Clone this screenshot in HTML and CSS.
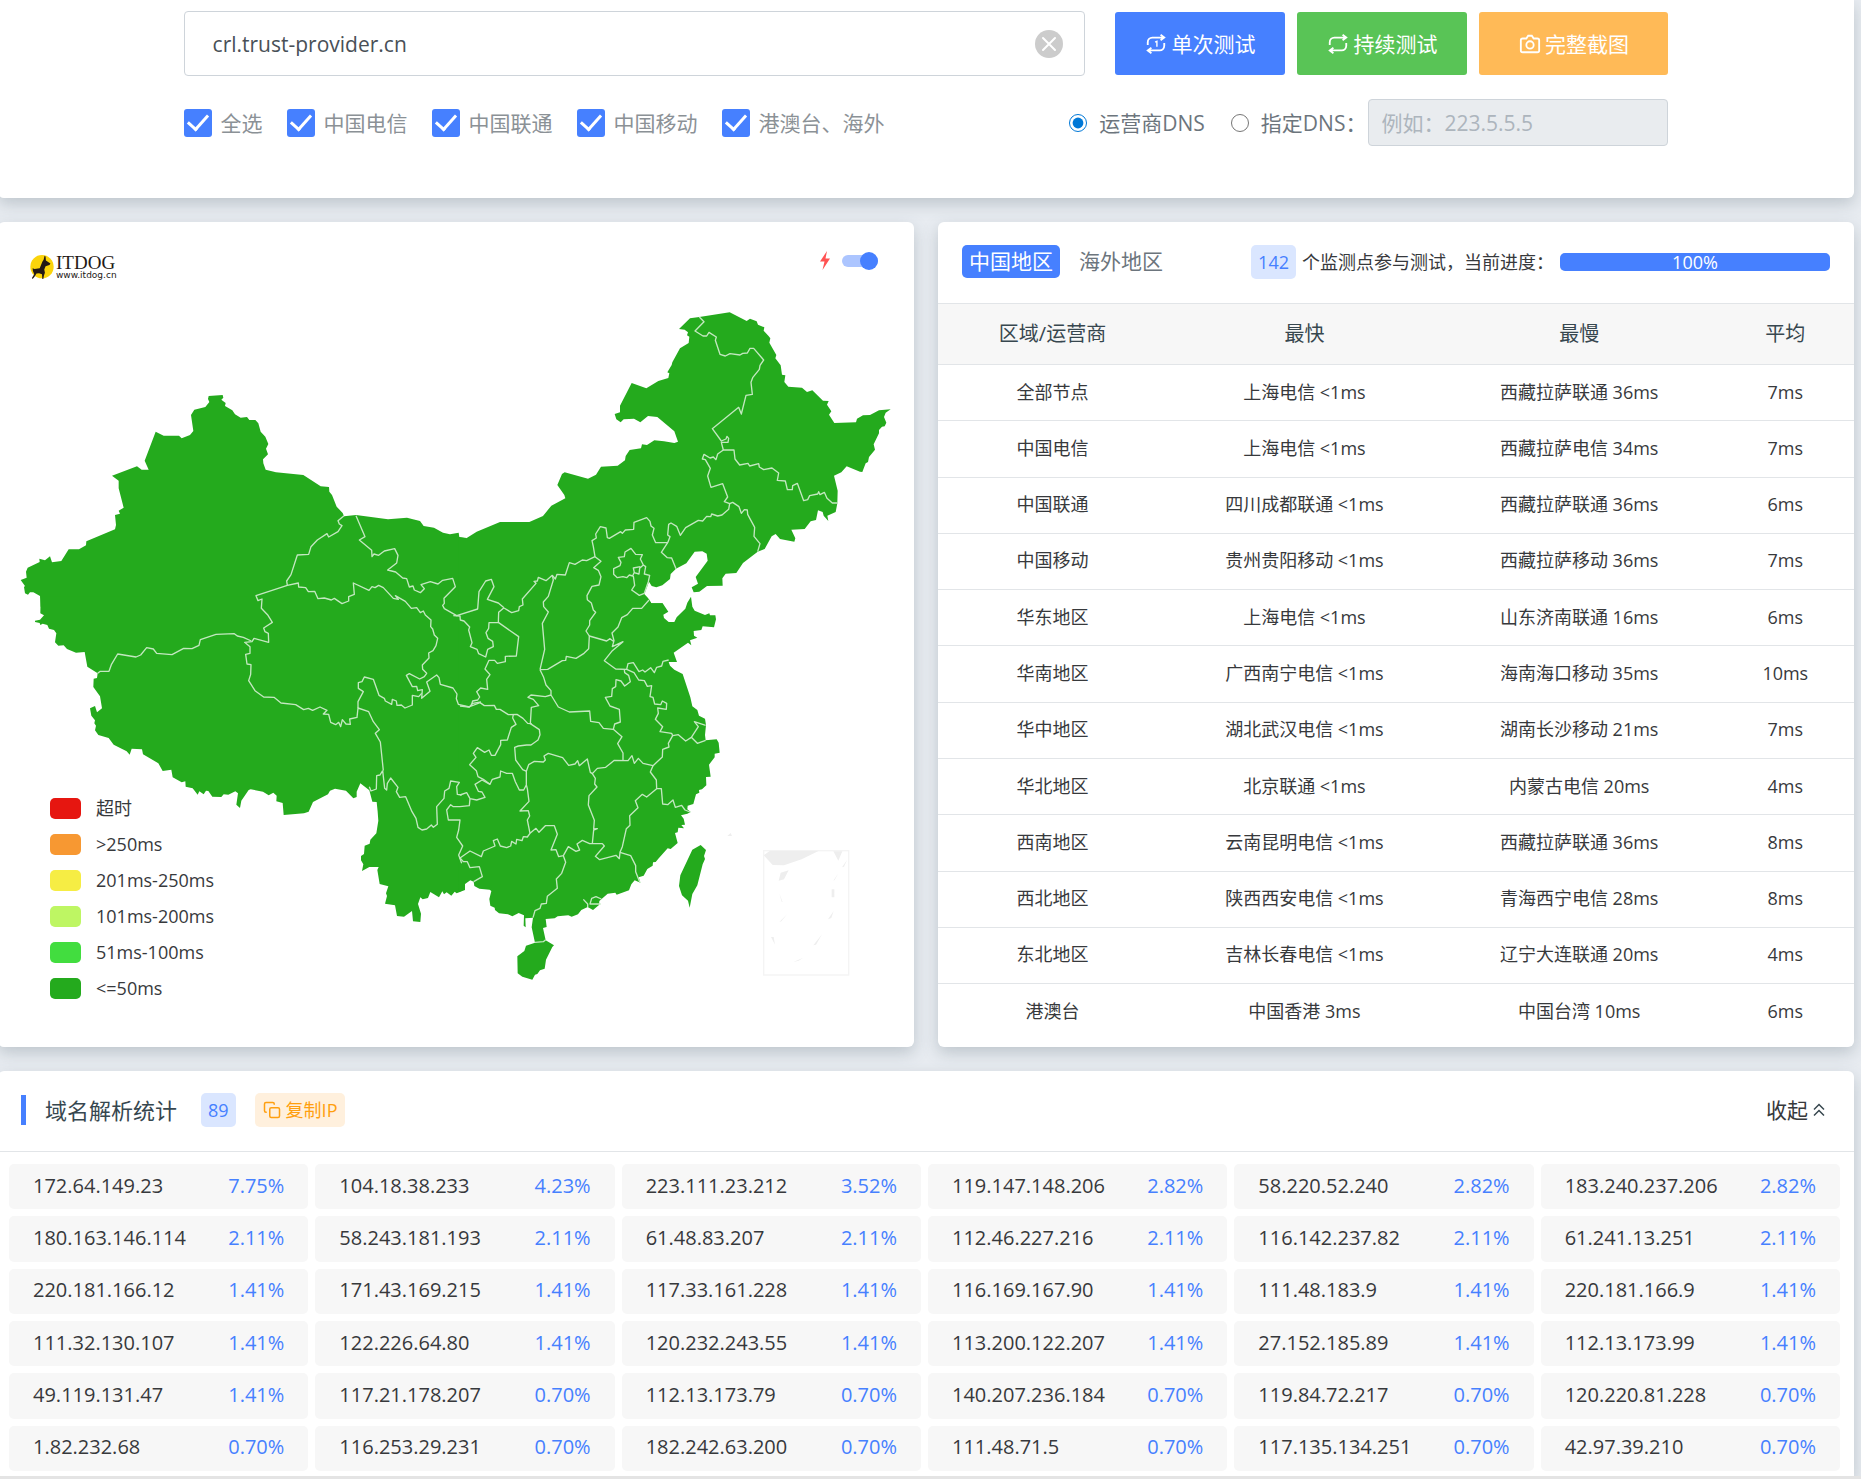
FILE: index.html
```html
<!DOCTYPE html>
<html lang="zh-CN">
<head>
<meta charset="utf-8">
<meta name="viewport" content="width=device-width, initial-scale=1">
<title>ITDOG</title>
<link rel="stylesheet" href="styles.css">
</head>
<body>
<main class="page">
  <form class="card search">
    <div class="search-row">
      <div class="target">
        <input class="target-input" type="text" value="crl.trust-provider.cn" aria-label="域名">
        <button class="clear" type="button" aria-label="清除"><svg viewBox="0 0 28 28" width="28" height="28"><circle cx="14" cy="14" r="14" fill="#ccc"/><path d="M8 8l12 12M20 8L8 20" stroke="#fff" stroke-width="2" stroke-linecap="round"/></svg></button>
      </div>
      <div class="actions">
        <button class="btn btn-blue" type="button"><svg class="icon" viewBox="0 0 24 24"><path d="M17 2l4 3-4 3M21 5H8a5 5 0 0 0-5 5v3M7 22l-4-3 4-3M3 19h13a5 5 0 0 0 5-5v-3"/><path d="M11 10l2-1v6" stroke-width="1.500"/></svg>单次测试</button>
        <button class="btn btn-green" type="button"><svg class="icon" viewBox="0 0 24 24"><path d="M17 2l4 3-4 3M21 5H8a5 5 0 0 0-5 5v3M7 22l-4-3 4-3M3 19h13a5 5 0 0 0 5-5v-3"/></svg>持续测试</button>
        <button class="btn btn-orange" type="button"><svg class="icon" viewBox="0 0 24 24"><path d="M4 6h4l2-3h4l2 3h4a2 2 0 0 1 2 2v11a2 2 0 0 1-2 2H4a2 2 0 0 1-2-2V8a2 2 0 0 1 2-2z"/><circle cx="12" cy="13" r="4"/></svg>完整截图</button>
      </div>
    </div>
    <div class="option-row">
      <div class="checks">
        <label class="check"><input type="checkbox" checked>全选</label>
        <label class="check"><input type="checkbox" checked>中国电信</label>
        <label class="check"><input type="checkbox" checked>中国联通</label>
        <label class="check"><input type="checkbox" checked>中国移动</label>
        <label class="check"><input type="checkbox" checked>港澳台、海外</label>
      </div>
      <div class="dns">
        <label class="radio"><input type="radio" name="dns" checked>运营商DNS</label>
        <label class="radio"><input type="radio" name="dns">指定DNS：</label>
        <input class="dns-input" type="text" placeholder="例如：223.5.5.5" aria-label="DNS" disabled>
      </div>
    </div>
  </form>

  <div class="columns">
    <section class="card map-card">
      <svg class="map" viewBox="-6 666 2748 2475" role="img" aria-label="中国地图">
        <g class="land">
          <g transform="translate(0 660)"><path d="M122,1160 L120,1128 100,1117 90,1117 84,1124 75,1120 72,1101 75,1098 62,1080 80,1073 78,1055 83,1043 119,1026 118,1016 135,1021 150,1009 156,1027 184,1023 206,988 237,988 258,976 259,964 345,928 348,915 345,885 360,881 356,872 371,863 356,805 356,782 336,767 411,739 425,749 446,749 434,722 467,635 491,647 537,647 545,655 570,645 580,633 573,585 583,569 616,561 628,546 624,537 626,528 668,525 670,533 664,539 677,549 675,558 697,571 705,583 722,593 741,591 748,600 766,600 775,610 782,635 796,650 805,672 798,686 804,703 789,718 790,730 797,749 828,757 910,765 962,799 987,801 988,815 996,825 1010,860 1028,879 1032,889 1068,885 1164,898 1221,893 1260,903 1271,918 1302,923 1329,938 1350,943 1376,938 1378,951 1400,954 1400,1160Z"/></g>
          <g transform="translate(1380 660)"><path d="M-5,1160 L-5,952 19,955 50,935 120,906 208,906 249,888 274,857 316,835 313,825 292,795 306,762 314,757 384,776 408,764 423,740 473,737 495,721 497,708 509,690 543,685 546,673 561,675 583,661 612,664 643,669 654,665 643,634 592,591 564,588 541,607 522,596 491,598 482,607 469,598 464,582 480,577 480,557 515,489 559,505 595,483 625,474 628,460 622,457 635,435 637,427 660,385 686,369 688,350 681,346 684,337 674,329 657,327 690,295 718,291 809,277 860,303 870,296 890,304 894,314 913,322 911,332 925,347 931,355 928,368 949,405 946,415 962,436 966,464 976,466 973,486 985,500 1026,503 1041,516 1057,511 1089,542 1106,543 1101,554 1114,574 1107,584 1123,609 1188,607 1191,596 1209,586 1230,585 1257,571 1292,568 1277,578 1272,591 1279,608 1274,619 1266,620 1257,630 1257,640 1241,673 1245,689 1227,711 1224,726 1217,730 1207,756 1200,755 1160,739 1144,757 1122,767 1133,812 1132,850 1127,876 1102,887 1105,903 1091,887 1088,876 1074,871 1068,900 1052,904 1034,927 994,929 1006,955 1003,965 960,957 947,942 935,949 914,987 893,995 849,1029 829,1059 797,1061 787,1075 788,1097 741,1098 718,1115 701,1117 695,1102 714,1091 707,1071 743,1022 740,1001 727,994 704,995 679,1030 648,1046 632,1062 630,1077 607,1096 589,1102 575,1098 567,1085 553,1122 567,1138 574,1150 607,1150 612,1160Z"/></g>
          <g transform="translate(0 1800)"><path d="M122,-10 L121,40 132,46 120,59 105,62 105,66 119,69 121,75 128,71 142,75 147,86 162,90 169,100 165,127 175,137 191,136 201,147 228,158 254,156 262,200 293,220 291,234 281,236 280,261 300,289 306,325 291,337 285,318 270,325 274,347 285,361 283,370 288,377 285,391 295,405 326,414 341,434 380,454 389,464 395,446 426,448 429,463 475,490 488,513 514,509 518,532 545,547 556,544 557,560 578,565 593,584 598,574 611,583 618,572 625,573 637,590 664,591 671,583 685,584 706,574 714,580 709,614 720,624 724,602 746,570 752,568 789,575 806,586 820,578 830,587 829,604 848,609 851,645 912,640 926,635 939,606 984,583 990,572 1005,566 1038,572 1060,595 1070,591 1070,575 1081,550 1108,571 1117,605 1130,606 1133,635 1135,662 1129,700 1111,719 1109,731 1094,737 1092,762 1083,768 1083,781 1090,793 1086,813 1108,801 1136,801 1132,810 1139,852 1165,859 1158,880 1161,888 1155,911 1185,916 1191,948 1212,950 1236,933 1239,964 1261,966 1263,941 1254,912 1261,892 1268,898 1284,894 1291,876 1317,892 1327,874 1332,883 1340,877 1354,887 1364,875 1370,880 1395,870 1395,-10Z"/></g>
          <g transform="translate(1380 1800)">
            <path d="M-5,-10 L560,-10 574,10 608,10 625,35 610,44 612,54 626,66 643,66 650,52 676,26 682,8 693,-10 697,20 704,32 735,45 748,40 750,46 766,46 768,58 762,82 728,79 724,90 701,93 702,107 712,113 690,121 694,136 684,128 641,158 651,186 626,186 630,197 643,209 668,222 691,292 697,319 712,330 717,347 735,356 738,375 735,405 737,421 770,418 776,428 779,458 764,461 764,472 747,494 752,530 738,531 739,556 726,568 717,570 718,578 708,583 700,612 683,617 682,628 692,636 682,641 663,646 671,656 675,674 664,675 672,685 655,683 653,697 645,699 653,729 632,747 623,745 595,776 587,786 579,787 578,797 562,807 551,827 536,832 541,848 524,841 514,853 507,871 470,884 466,878 443,881 418,903 417,915 399,930 383,921 364,930 354,943 335,950 325,946 293,949 284,955 257,957 260,981 249,984 257,1021 282,1036 277,1041 258,1079 254,1106 240,1111 232,1122 225,1124 217,1139 187,1130 173,1120 172,1069 193,1053 198,1037 225,1028 215,982 219,953 196,955 197,982 191,977 192,946 176,939 157,949 144,943 117,940 105,930 104,923 91,917 88,897 94,873 89,869 58,866 43,858 41,845 31,841 12,854 6,872 -5,876Z"/>
            <path d="M722,735 L738,750 732,768 735,777 728,793 712,856 697,882 689,923 684,902 666,886 657,858 661,826 697,749Z"/>
          </g>
        </g>
        <g class="borders">
          <g transform="translate(690 1440)">
            <path d="M342,107 L324,122 328,132 336,137 324,155 296,171 291,161 262,180 243,200 236,223 202,225 183,284 170,303 172,316 78,347 84,362 96,357 94,385 114,406 127,427 101,444 105,455 115,460 116,487 72,475 66,485 44,487 60,500 60,520 47,523 51,552 63,554 62,583 56,602 75,632 101,651 132,652 153,669 197,674 221,689 235,685 248,691 270,681 291,691 280,702 296,703 302,727 317,734 326,727 332,740 337,719 348,732 361,733 359,717 381,712 384,684 416,695 430,725 448,749 436,760 451,786 460,872"/>
            <path d="M172,316 L205,309 206,321 227,323 235,335 254,334 264,356 283,354 304,360 313,355 336,371 356,363 356,350 373,343 370,309 417,331 426,320 435,323 446,316 460,323 490,355 505,358 496,347 526,364 544,385 560,383 571,398 580,393 586,405 603,420 602,440 608,447 613,465 623,475 618,497 609,512 596,519 597,534 577,555 578,568 590,580 583,590 569,597 538,581 529,586 547,620 560,619 563,632 577,629 575,655 600,634 590,606 620,585 627,593 631,613 669,624 681,642 679,656 685,673 718,681 728,670 753,666"/>
            <path d="M384,684 L384,665 400,635 385,625 385,608 396,605 403,591 430,598 447,646 463,655 466,663 485,673 487,658 499,663 501,676 514,675 525,684 547,675 547,646 566,650 575,640"/>
            <path d="M378,107 L405,170 388,180 425,211 426,230 432,222 446,226 463,213 494,206 504,226 500,249 473,270 497,276 518,294 530,296 538,321 549,318 553,330 571,338 583,326 573,314 601,305 624,312 638,301 668,295 676,320 642,355 643,370 638,376 643,386 680,407 743,387 747,335 767,303 784,298 792,320 772,358 805,369 822,383"/>
            <path d="M670,407 L690,408 691,420 702,423 719,441 716,450 726,488 721,500 741,508 746,521 767,531 773,508 790,500 788,484 774,475 768,458 776,445 777,428 805,428 806,397 822,383"/>
          </g>
          <path transform="translate(0 1800)" d="M293,220 L301,214 327,214 334,194 353,162 408,171 422,165 440,143 460,147 470,160 516,164 551,145 576,146 597,136 601,119 648,103 703,101 712,108 730,112 754,123 M1148,512 L1154,565 1160,570 1162,550 1172,534 1194,562 1189,575 1199,592 1217,590 1236,635 1248,655 1254,682 1266,690 1280,687 1294,675 1300,682 1312,673 1310,620 1332,595 1334,573 1347,565 1352,543 1378,547 1370,560 1372,583 1385,585 M1148,512 L1140,525 1130,527 1129,567 1113,573 1108,560 M1380,620 L1360,620 1352,614 1340,630 1345,660 1380,660 1376,690 1370,712 1388,738 1376,765 1385,790"/>
          <g transform="translate(1380 660)">
            <path d="M718,291 L732,305 705,333 729,348 740,348 747,337 769,351 766,361 780,403 796,408 810,401 840,405 848,400 862,399 870,385 881,385 911,420 900,436 898,448 878,473 873,487 877,523 858,526 844,582 836,562 757,626 784,663 798,657 801,649 806,655 804,667 784,667 790,690 822,690 825,717 839,735 864,730 869,738 896,731 898,741 911,749 936,744 956,759 952,781 976,783 982,809 997,809 998,797 1012,790 1031,842 1043,839 1049,827 1073,822 1076,815 1080,824 1093,817 1101,835 1117,849 1133,849"/>
            <path d="M790,690 L773,702 768,719 760,711 750,714 732,703 727,717 736,719 751,745 743,768 753,802 788,791 803,831 793,845 809,851 818,847 837,860 844,880 853,869 862,870 863,883 884,922 882,949 900,971 893,995"/>
            <path d="M809,851 L806,868 786,885 773,888 755,882 752,890 740,889 728,903 715,901 677,923 661,946 650,919 633,909 626,913 623,945 630,950 623,968 604,997 622,1013 635,1014 648,1046"/>
            <path d="M623,968 L587,968 577,945 582,925 573,918 570,904 560,893 522,907 521,928 496,930 487,940 482,935 448,955 442,953 438,924 421,920 407,942 409,954 396,962 400,980 405,1010 380,1022 367,1020 345,1033 328,1028 316,1065 291,1063 286,1077 277,1066 258,1082 235,1072 232,1083 222,1084 228,1090 187,1137 189,1155 178,1160 176,1172 155,1178 132,1164"/>
            <path d="M405,1010 L423,1024 401,1043 415,1051 423,1070 417,1095 396,1099 381,1127 382,1139 394,1149 400,1170 407,1177 389,1202 389,1215 378,1233 388,1248 M277,1066 L280,1080 265,1129 250,1146 251,1160 265,1176 247,1210 254,1288 240,1349"/>
            <path d="M461,1046 L480,1037 483,1027 475,1012 493,1010 495,996 513,985 527,1003 547,1004 541,1017 550,1035 539,1045 537,1062 522,1058 518,1068 508,1065 500,1073 489,1070 472,1073 461,1063Z M550,1035 L557,1040 553,1062 569,1066 565,1085 553,1120 538,1126 515,1110 524,1096 520,1068 M523,1058 L520,1044 541,1040"/>
          </g>
          <g transform="translate(1380 1800)">
            <path d="M116,68 L176,110 169,168 136,169 136,185 112,190 104,181 87,181 75,207 90,224 80,238 83,268 62,264 50,275 59,291 53,300 38,303 34,316 M0,318 L27,321 60,308 73,317 103,316 109,328 120,328 145,344 171,343 189,355 203,370 215,371"/>
            <path d="M240,209 L263,208 307,182 317,181 319,169 348,175 372,160 386,146 388,108 440,123 450,116 460,124 M567,0 L545,25 518,25 502,44 485,53 474,81 456,99 462,122 457,140 489,125 457,152 433,182 467,207 500,208 504,191 520,188 537,215 548,210 555,216 572,203 583,218 590,202 605,198 609,184 626,180"/>
            <path d="M500,208 L522,218 536,240 553,242 562,259 575,257 570,290 579,292 584,312 602,314 607,303 620,310 619,328 593,324 595,340 586,358 608,380 600,395 635,400 638,407 655,404 677,423 694,412 712,430 737,421 M694,412 L715,380 703,365 737,376 M493,208 L494,218 506,226 511,245 494,258 483,243 468,239 467,260 457,266 455,289 436,292 450,318 478,328 481,366 464,372 460,388"/>
            <path d="M240,209 L251,232 258,255 273,272 273,285 295,321 328,336 389,333 392,364 417,368 430,385 460,388 486,410 473,431 489,459 489,482 M273,285 L256,290 213,285 204,292 220,298 236,317 214,322 211,371 238,389 240,404 234,420 213,435 200,435 175,438 164,442 167,480 188,509 200,514"/>
            <path d="M160,343 L158,354 168,373 154,382 142,420 122,421 122,434 105,466 94,466 87,450 74,457 52,443 40,460 48,472 29,494 49,512 54,530 70,538 90,553 97,538 120,531 122,513 140,520 157,520 166,545 178,570 191,570 199,555 199,514 206,494 223,484 250,486 256,480 252,468 265,460 308,473 326,496 345,492 353,482 358,497 382,477 391,517 397,521 412,505 437,502 463,481 504,482 516,467 523,490 535,475 549,490 579,497 607,471 608,448 627,441 625,430 638,407"/>
            <path d="M579,497 L571,516 589,540 590,566 604,566 608,612 623,614 639,600 646,622 665,616 675,630 690,636 M590,566 L560,591 547,583 526,602 534,623 509,647 510,676 499,686 487,740 480,757 M397,521 L406,535 404,552 411,561 387,587 385,615 403,661 401,687 412,686 401,690 397,731"/>
            <path d="M199,555 L202,566 207,604 180,633 205,632 209,648 202,660 206,680 210,700 228,685 237,697 256,677 283,677 292,703 273,750 288,749 296,770 310,767 325,740 348,754 359,750 351,732 367,721 389,731 427,731 433,738 406,769 419,779 468,766 478,776 480,757 512,767 527,797 527,815 540,848 M310,767 L317,787 305,820 289,837 292,865 262,889 259,910 244,912 240,925 225,932 219,953"/>
            <path d="M210,700 L202,711 190,710 186,722 170,718 168,732 155,724 152,738 140,743 121,738 112,717 100,722 105,738 70,753 64,770 30,753 0,774 10,785 22,785 30,803 58,800 67,830 41,845 M90,553 L66,540 45,553 55,574 66,576 75,592 50,600 30,596 28,617 0,620 M30,596 L20,578 0,585 M225,1027 L250,1025 257,1019 M370,898 L383,912 383,921 M422,912 L390,912 395,895 408,890 424,897"/>
          </g>
        </g>
        <g class="inset" transform="translate(1380 1800)">
          <rect x="911" y="752" width="255" height="373"/>
          <path d="M911,766 L930,752 1077,752 1025,778 972,796 938,795Z M962,818 L986,811 972,838 956,842Z M1120,754 L1147,754 1135,782Z M1161,780 L1146,802 1152,800Z M1135,820 L1120,842 1124,840Z M1115,868 L1123,868 1123,892 1115,892Z M1121,933 L1104,958 1114,954Z M1086,1003 L1060,1036 1068,1034Z M1030,1073 L1000,1086 1016,1082Z M933,1011 L941,1011 945,1034Z M982,942 L958,966 964,964Z M958,880 L968,907 965,905Z M802,708 L812,699 816,708Z"/>
        </g>
      </svg>
      <div class="map-head">
        <a class="logo" href="#">
          <svg viewBox="29 45 72 74" width="24" height="24" aria-hidden="true"><circle cx="65" cy="81" r="36" fill="#fbd40b"/><path fill="#231815" d="M73,47 L76,50 77,62 91,71 88,76 76,80 72,90 74,100 71,108 69,119 66,119 65,104 56,101 48,102 42,112 36,119 34,116 41,104 37,94 36,86 42,88 58,86 66,66 70,60Z"/></svg>
          <span class="logo-text"><span class="logo-name">ITDOG</span><span class="logo-url">www.itdog.cn</span></span>
        </a>
        <label class="fast">
          <svg viewBox="0 0 10 19" width="10" height="19" aria-hidden="true"><path fill="#ff5252" d="M7 0L0 10.500h4.500L2.500 19 10 7.500H5.500z"/></svg>
          <input class="switch" type="checkbox" checked aria-label="快速模式">
        </label>
      </div>
      <ul class="legend">
        <li><i class="swatch timeout"></i>超时</li>
        <li><i class="swatch over-250"></i>&gt;250ms</li>
        <li><i class="swatch to-250"></i>201ms-250ms</li>
        <li><i class="swatch to-200"></i>101ms-200ms</li>
        <li><i class="swatch to-100"></i>51ms-100ms</li>
        <li><i class="swatch to-50"></i>&lt;=50ms</li>
      </ul>
    </section>

    <section class="card result-card">
      <header class="result-head">
        <nav class="tabs"><button class="tab tab-active" type="button">中国地区</button><button class="tab" type="button">海外地区</button></nav>
        <div class="progress-info">
          <span class="badge">142</span>
          <span>个监测点参与测试，当前进度：</span>
          <div class="progress"><div class="progress-bar" style="width:100%">100%</div></div>
        </div>
      </header>
      <table class="result">
        <thead><tr><th class="col-area">区域/运营商</th><th class="col-wide">最快</th><th class="col-wide">最慢</th><th>平均</th></tr></thead>
        <tbody>
          <tr><td>全部节点</td><td>上海电信 &lt;1ms</td><td>西藏拉萨联通 36ms</td><td>7ms</td></tr>
          <tr><td>中国电信</td><td>上海电信 &lt;1ms</td><td>西藏拉萨电信 34ms</td><td>7ms</td></tr>
          <tr><td>中国联通</td><td>四川成都联通 &lt;1ms</td><td>西藏拉萨联通 36ms</td><td>6ms</td></tr>
          <tr><td>中国移动</td><td>贵州贵阳移动 &lt;1ms</td><td>西藏拉萨移动 36ms</td><td>7ms</td></tr>
          <tr><td>华东地区</td><td>上海电信 &lt;1ms</td><td>山东济南联通 16ms</td><td>6ms</td></tr>
          <tr><td>华南地区</td><td>广西南宁电信 &lt;1ms</td><td>海南海口移动 35ms</td><td>10ms</td></tr>
          <tr><td>华中地区</td><td>湖北武汉电信 &lt;1ms</td><td>湖南长沙移动 21ms</td><td>7ms</td></tr>
          <tr><td>华北地区</td><td>北京联通 &lt;1ms</td><td>内蒙古电信 20ms</td><td>4ms</td></tr>
          <tr><td>西南地区</td><td>云南昆明电信 &lt;1ms</td><td>西藏拉萨联通 36ms</td><td>8ms</td></tr>
          <tr><td>西北地区</td><td>陕西西安电信 &lt;1ms</td><td>青海西宁电信 28ms</td><td>8ms</td></tr>
          <tr><td>东北地区</td><td>吉林长春电信 &lt;1ms</td><td>辽宁大连联通 20ms</td><td>4ms</td></tr>
          <tr><td>港澳台</td><td>中国香港 3ms</td><td>中国台湾 10ms</td><td>6ms</td></tr>
        </tbody>
      </table>
    </section>
  </div>

  <section class="card stats">
    <header class="stats-head">
      <h2 class="stats-title">域名解析统计</h2>
      <span class="badge">89</span>
      <button class="copy" type="button"><svg class="icon" viewBox="0 0 24 24"><rect x="9" y="9" width="13" height="13" rx="2"/><path d="M5 15H4a2 2 0 0 1-2-2V4a2 2 0 0 1 2-2h9a2 2 0 0 1 2 2v1"/></svg>复制IP</button>
      <button class="collapse" type="button">收起<svg viewBox="0 0 12 14" width="12" height="14" aria-hidden="true"><path d="M1 6.500l5-5 5 5M1 12.500l5-5 5 5" fill="none" stroke="#37474f" stroke-width="1.500"/></svg></button>
    </header>
    <ul class="ips">
      <li>172.64.149.23<span>7.75%</span></li><li>104.18.38.233<span>4.23%</span></li><li>223.111.23.212<span>3.52%</span></li><li>119.147.148.206<span>2.82%</span></li><li>58.220.52.240<span>2.82%</span></li><li>183.240.237.206<span>2.82%</span></li>
      <li>180.163.146.114<span>2.11%</span></li><li>58.243.181.193<span>2.11%</span></li><li>61.48.83.207<span>2.11%</span></li><li>112.46.227.216<span>2.11%</span></li><li>116.142.237.82<span>2.11%</span></li><li>61.241.13.251<span>2.11%</span></li>
      <li>220.181.166.12<span>1.41%</span></li><li>171.43.169.215<span>1.41%</span></li><li>117.33.161.228<span>1.41%</span></li><li>116.169.167.90<span>1.41%</span></li><li>111.48.183.9<span>1.41%</span></li><li>220.181.166.9<span>1.41%</span></li>
      <li>111.32.130.107<span>1.41%</span></li><li>122.226.64.80<span>1.41%</span></li><li>120.232.243.55<span>1.41%</span></li><li>113.200.122.207<span>1.41%</span></li><li>27.152.185.89<span>1.41%</span></li><li>112.13.173.99<span>1.41%</span></li>
      <li>49.119.131.47<span>1.41%</span></li><li>117.21.178.207<span>0.70%</span></li><li>112.13.173.79<span>0.70%</span></li><li>140.207.236.184<span>0.70%</span></li><li>119.84.72.217<span>0.70%</span></li><li>120.220.81.228<span>0.70%</span></li>
      <li>1.82.232.68<span>0.70%</span></li><li>116.253.29.231<span>0.70%</span></li><li>182.242.63.200<span>0.70%</span></li><li>111.48.71.5<span>0.70%</span></li><li>117.135.134.251<span>0.70%</span></li><li>42.97.39.210<span>0.70%</span></li>
    </ul>
  </section>
</main>
<div class="page-end"></div>
</body>
</html>
```
FILE: styles.css
```css
* { box-sizing: border-box; }

body {
  margin: 0;
  overflow-x: hidden;
  background: #e8ecf1;
  color: #37393c;
  font: 18px/24px "Open Sans", "Noto Sans CJK SC", sans-serif;
}

button, input { font: inherit; color: inherit; }
button { border: 0; background: none; padding: 0; cursor: pointer; }
ul { list-style: none; margin: 0; padding: 0; }

.page { margin: 0 7px 0 -2px; }

.card {
  background: #fff;
  border-radius: 6px;
  box-shadow: 0 6px 16px rgba(69, 90, 100, 0.26);
}

.icon {
  width: 22px;
  height: 22px;
  fill: none;
  stroke: currentColor;
  stroke-width: 2;
}

/* search form */
.search {
  padding: 11px 10% 52px;
  border-radius: 0 0 6px 6px;
  font-size: 21px;
}
.search-row { display: flex; align-items: center; gap: 30px; margin-bottom: 23px; }
.target {
  flex: 1;
  display: flex;
  align-items: center;
  height: 65px;
  padding: 0 21px 0 28px;
  border: 1px solid #ced4da;
  border-radius: 4px;
}
.target-input { flex: 1; min-width: 0; border: 0; padding: 0; outline: 0; color: #495057; }
.clear { display: flex; }
.actions { display: flex; gap: 12px; }
.btn {
  display: flex;
  align-items: center;
  justify-content: center;
  gap: 4px;
  width: 170px;
  height: 63px;
  border-radius: 3px;
  color: #fff;
}
.btn-blue { background: #4680ff; }
.btn-green { background: #59c456; }
.btn-orange { width: 189px; background: #ffba57; }

.option-row { display: flex; justify-content: space-between; align-items: center; }
.checks { display: flex; gap: 24px; color: #8b9196; }
.check { display: flex; align-items: center; gap: 9px; }
.check input {
  appearance: none;
  display: grid;
  place-items: center;
  width: 28px;
  height: 28px;
  margin: 0;
  border-radius: 3px;
  background: #4680ff;
}
.check input::before {
  content: "";
  width: 17px;
  height: 9px;
  border: solid #fff;
  border-width: 0 0 3px 3px;
  transform: translateY(-3px) rotate(-48deg);
}
.dns { display: flex; align-items: center; color: #6c757d; }
.radio { display: flex; align-items: center; gap: 12px; margin-right: 26px; }
.radio input { width: 18px; height: 18px; margin: 0; accent-color: #0078d7; }
.radio + .radio { margin-right: 2px; }
.dns-input {
  width: 300px;
  height: 47px;
  padding: 0 12px;
  border: 1px solid #ced4da;
  border-radius: 4px;
  background: #e9ecef;
}
.dns-input::placeholder { color: #adb5bd; }

.columns {
  display: grid;
  grid-template-columns: 1fr 1fr;
  gap: 24px;
  margin: 24px 0;
}

/* map */
.map-card { display: grid; }
.map-card > * { grid-area: 1 / 1; }
.map { display: block; width: 100%; height: auto; }
.land { fill: #24aa1d; }
.borders { fill: none; stroke: #c3e8c0; stroke-width: 4; stroke-linejoin: round; }
.inset path { fill: #eee; }
.inset rect { fill: none; stroke: #f4f4f4; stroke-width: 4; }
.map-head {
  align-self: start;
  display: flex;
  justify-content: space-between;
  align-items: flex-start;
  padding: 29px 36px 0 32px;
}
.logo { display: flex; align-items: center; gap: 2px; padding-top: 4px; color: #231815; text-decoration: none; }
.logo-text { display: flex; flex-direction: column; }
.logo-name { font: 19px/16px "Liberation Serif", serif; }
.logo-url { font: 9px/8px "DejaVu Sans", sans-serif; }
.fast { display: flex; align-items: center; gap: 12px; }
.switch {
  appearance: none;
  display: flex;
  align-items: center;
  justify-content: flex-end;
  width: 36px;
  height: 12px;
  margin: 0;
  border-radius: 6px;
  background: #acc5ff;
}
.switch::before { content: ""; width: 18px; height: 18px; border-radius: 9px; background: #4680ff; }
.legend { place-self: end start; padding: 0 0 41px 52px; }
.legend li { display: flex; align-items: center; gap: 15px; height: 36px; }
.swatch { width: 31px; height: 21px; border-radius: 5px; }
.timeout { background: #e61610; }
.over-250 { background: #f79832; }
.to-250 { background: #f6ed44; }
.to-200 { background: #bef663; }
.to-100 { background: #42dd3f; }
.to-50 { background: #24aa1d; }

/* regional results */
.result-head {
  display: flex;
  justify-content: space-between;
  align-items: center;
  height: 81px;
  padding: 0 24px 2px;
}
.tabs { display: flex; gap: 12px; }
.tab { height: 33px; padding: 0 7px; border-radius: 5px; color: #6c757d; font-size: 21px; line-height: 33px; }
.tab-active { background: #4680ff; color: #fff; }
.progress-info { display: flex; align-items: center; gap: 6px; }
.badge {
  padding: 0 7px;
  border-radius: 5px;
  background: #dae6ff;
  color: #4680ff;
  line-height: 34px;
}
.progress { width: 270px; height: 18px; border-radius: 5px; background: #e9ecef; }
.progress-bar { height: 100%; border-radius: 5px; background: #4680ff; color: #fff; line-height: 18px; text-align: center; }
.result { width: 100%; height: 736px; border-collapse: collapse; table-layout: fixed; text-align: center; }
.result th {
  height: 61px;
  padding: 0;
  border: solid #e2e5e8;
  border-width: 1px 0;
  background: #f7f7f7;
  color: #37474f;
  font-size: 20px;
  font-weight: 400;
}
.result td { padding: 0 0 2px; border-top: 1px solid #e2e5e8; }
.col-area { width: 25%; }
.col-wide { width: 30%; }

/* resolved addresses */
.stats { border-radius: 6px 6px 0 0; }
.stats-head { display: flex; align-items: center; height: 81px; padding: 0 29px 2px 23px; border-bottom: 1px solid #e2e5e8; }
.stats-title {
  display: flex;
  align-items: center;
  gap: 19px;
  margin: 0 24px 0 0;
  color: #37474f;
  font-size: 22px;
  font-weight: 400;
}
.stats-title::before { content: ""; width: 5px; height: 30px; background: #4680ff; }
.copy {
  display: flex;
  align-items: center;
  gap: 5px;
  height: 34px;
  margin-left: 19px;
  padding: 0 8px;
  border-radius: 5px;
  background: #fff0dd;
  color: #ff9f0f;
}
.copy .icon { width: 18px; height: 18px; }
.collapse { display: flex; align-items: center; gap: 5px; margin-left: auto; font-size: 21px; }
.ips {
  display: grid;
  grid-template-columns: repeat(6, 1fr);
  grid-auto-rows: 1fr;
  gap: 7px;
  height: 324px;
  padding: 12px 14px 5px 11px;
  font-size: 20px;
}
.ips li {
  display: flex;
  align-items: center;
  justify-content: space-between;
  padding: 0 24px 2px;
  border-radius: 5px;
  background: #f7f7f7;
}
.ips span { color: #4680ff; }

.page-end { height: 3px; background: #e4e4e4; }
```
